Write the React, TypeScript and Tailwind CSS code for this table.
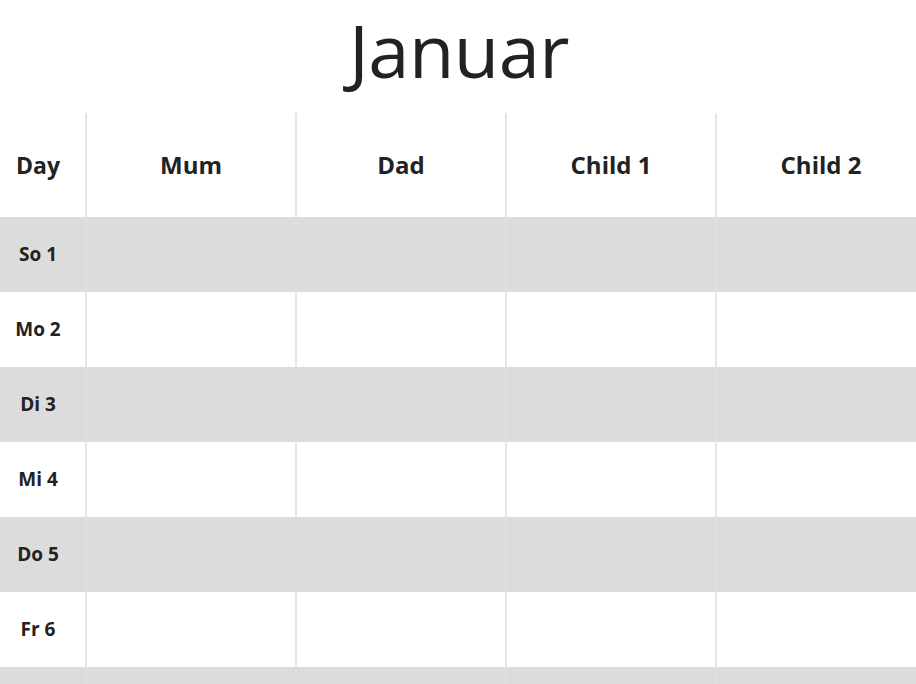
import React from "react";

const cols = ["Mum", "Dad", "Child 1", "Child 2"];
const days = ["So 1", "Mo 2", "Di 3", "Mi 4", "Do 5", "Fr 6", ""];

export default function App() {
  return (
    <div
      className="w-[916px] h-[684px] overflow-hidden bg-white text-[#222222]"
      style={{ fontFamily: '"Open Sans", "Noto Sans", sans-serif' }}
    >
      <div className="h-[113px] flex items-center justify-center">
        <h1 className="text-[74px] font-normal leading-none tracking-[-0.5px] pb-[14px] pl-[2px]">Januar</h1>
      </div>
      <div className="w-[1000px]">
        <div className="grid grid-cols-[85px_210px_210px_210px_210px] h-[104px]">
          <div className="flex items-center justify-center pr-[9px] text-[23px] font-bold">Day</div>
          {cols.map((c) => (
            <div
              key={c}
              className="flex items-center justify-center border-l-2 border-[#e6e6e6] text-[24px] font-bold"
            >
              {c}
            </div>
          ))}
        </div>
        {days.map((d, i) => (
          <div
            key={i}
            className={`grid grid-cols-[85px_210px_210px_210px_210px] h-[75px] ${
              i % 2 === 0 ? "bg-[#dcdcdc]" : "bg-white"
            }`}
          >
            <div className="flex items-center justify-center pr-[9px] text-[19px] font-bold">{d}</div>
            {cols.map((c) => (
              <div
                key={c}
                className={`border-l-2 ${i % 2 === 0 ? "border-[#e0e0e0]" : "border-[#e6e6e6]"}`}
              />
            ))}
          </div>
        ))}
      </div>
    </div>
  );
}
